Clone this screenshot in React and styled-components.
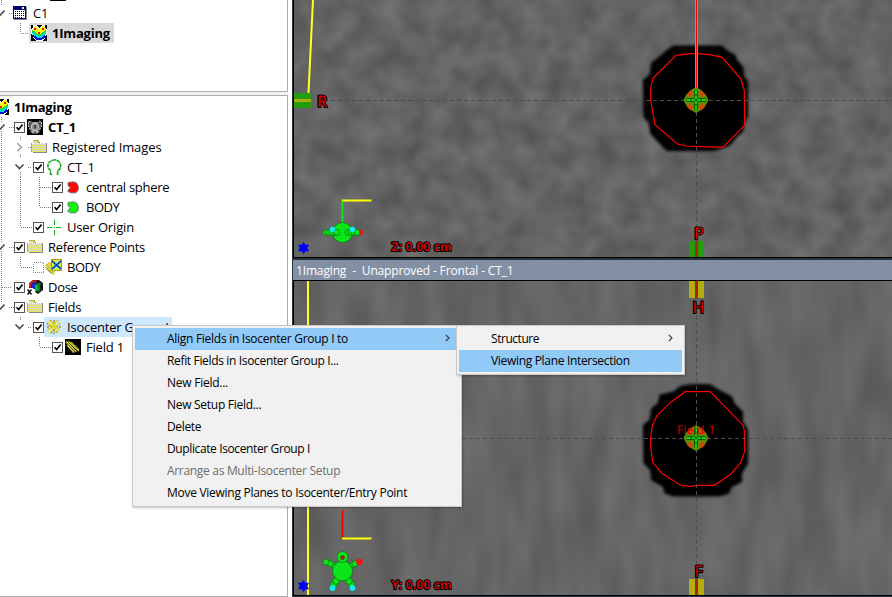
import React from 'react';
import styled, { createGlobalStyle, css } from 'styled-components';

const GlobalStyle = createGlobalStyle`
  * { box-sizing: border-box; }
  body { margin: 0; background: #fff; overflow: hidden; }
`;

const uiFont = `"Open Sans", "Noto Sans", sans-serif`;

const Window = styled.div`
  position: relative;
  width: 892px;
  height: 597px;
  display: flex;
  overflow: hidden;
  background: #fff;
  font-family: ${uiFont};
  color: #000;
`;

const Sidebar = styled.aside`
  width: 288px;
  flex: none;
  display: flex;
  flex-direction: column;
  background: #f0f0f0;
`;

const ScopePanel = styled.section`
  height: 92px;
  overflow: hidden;
  background: #fff;
  border: solid #adadad;
  border-width: 0 1px 1px 0;
  padding-top: 3px;
`;

const ObjectPanel = styled.section`
  height: 502px;
  margin-top: 3px;
  overflow: hidden;
  background: #fff;
  border: solid #adadad;
  border-width: 1px 1px 1px 0;
  padding-top: 1px;
`;

const Row = styled.div`
  display: flex;
  align-items: center;
  height: 20px;
`;

const Gutter = styled.svg`
  flex: none;
  width: ${(p) => p.$w}px;
  height: 20px;
  overflow: visible;
`;

const Entry = styled.div`
  display: flex;
  align-items: center;
  height: 20px;
  padding-left: ${(p) => p.$pad || 0}px;
  padding-right: ${(p) => p.$end || 0}px;
  background: ${(p) => p.$bg || 'transparent'};
`;

const Label = styled.span`
  font-size: 13px;
  line-height: 20px;
  white-space: pre;
  margin-left: ${(p) => p.$gap ?? 5}px;
  letter-spacing: ${(p) => p.$ls ?? -0.15}px;
  ${(p) => p.$bold && css`font-weight: 700;`}
`;

const Glyph = styled.svg`
  flex: none;
  display: block;
  overflow: ${(p) => (p.$clip ? 'hidden' : 'visible')};
`;

const Workspace = styled.main`
  flex: 1;
  margin-left: 4px;
  display: flex;
  flex-direction: column;
  background: #26343f;
`;

const View = styled.div`
  height: ${(p) => p.$h}px;
  margin-left: 1px;
  border-left: 1px solid #000;
  border-bottom: 1px solid #000;
  overflow: hidden;
`;

const Scene = styled.svg`
  display: block;
  text-rendering: geometricPrecision;
`;

const ViewTitle = styled.header`
  height: 21px;
  margin: 2px 0 0 1px;
  padding-left: 3px;
  background: #8390a4;
  border-bottom: 1px solid #000;
  color: #fff;
  font-size: 12px;
  line-height: 21px;
  white-space: pre;
  letter-spacing: -0.15px;
`;

const Menu = styled.div`
  position: absolute;
  left: ${(p) => p.$x}px;
  top: ${(p) => p.$y}px;
  width: ${(p) => p.$w}px;
  padding: 2px;
  background: #f1f1f1;
  border: 1px solid #c8c8c8;
  box-shadow: 1px 1px 2px rgba(0, 0, 0, 0.25);
`;

const MenuItem = styled.div`
  display: flex;
  align-items: center;
  justify-content: space-between;
  height: 22px;
  padding: 0 ${(p) => p.$end ?? 6}px 2px 32px;
  font-size: 12px;
  letter-spacing: ${(p) => p.$ls ?? -0.28}px;
  white-space: nowrap;
  color: ${(p) => (p.$disabled ? '#6d6d6d' : '#000')};
  background: ${(p) => (p.$active ? '#91c9f7' : 'transparent')};
`;

/* ---------- tree parts ---------- */

const dots = { stroke: '#808080', strokeDasharray: '1 1', fill: 'none', shapeRendering: 'crispEdges' };

function Guides({ w, lines = '', children }) {
  return (
    <Gutter $w={w}>
      {lines && <path d={lines} {...dots} />}
      {children}
    </Gutter>
  );
}

const Open = ({ x = 15 }) => (
  <path d={`M${x + 0.5} 7.5 L${x + 4.5} 11.5 L${x + 8.5} 7.5`} fill="none" stroke="#4a4a4a" strokeWidth="1.6" />
);
const Closed = () => <path d="M17.3 6.3l4 4-4 4" fill="none" stroke="#a0a0a0" strokeWidth="1.5" />;

const Check = ({ off }) => (
  <Glyph width="11" height="11" viewBox="0 0 11 11">
    {off ? (
      <rect x=".5" y=".5" width="10" height="10" fill="none" stroke="#909090" strokeDasharray="1 1" shapeRendering="crispEdges" />
    ) : (
      <>
        <rect x=".5" y=".5" width="10" height="10" fill="#fff" stroke="#555" />
        <path d="M2.6 5.2l2 2.3 4-5" fill="none" stroke="#000" strokeWidth="1.7" />
      </>
    )}
  </Glyph>
);

const PlanArt = () => (
  <g shapeRendering="crispEdges">
    <rect width="16" height="16" fill="#000" />
    <path d="M2 0h3l3 3 3-3h3v2l2 3v4l-2 2v2l-3 3H5l-3-3v-2L0 9V5l2-3z" fill="#fff" />
    <path d="M2 9h12v3l-2 2-2 1H6l-2-1-2-2z" fill="#0010d0" />
    <path d="M1 7h14v2l-3 2-2 2H6l-2-2-3-2z" fill="#00d8e8" />
    <path d="M1 5h14v2l-4 2-1 2H6L5 9 1 7z" fill="#20e020" />
    <path d="M2 3l2-2 4 3 4-3 2 2v3l-3 1-1 2H6L5 7 2 6z" fill="#ffff00" />
    <path d="M3 3h2v2H3zM11 3h2v2h-2zM7 7h2v2H7z" fill="#f01010" />
  </g>
);

const PlanIcon = () => (
  <Glyph width="16" height="16" viewBox="0 0 16 16"><PlanArt /></Glyph>
);

const CourseIcon = () => (
  <Glyph width="14" height="14" viewBox="0 0 14 14" shapeRendering="crispEdges">
    <path d="M1 1h13v13H1z" fill="#888" />
    <rect width="13" height="13" fill="#00007c" />
    <path d="M1 4h11v8H1z" fill="#fff" />
    <path d="M9 1h2v2H9z" fill="#fff" />
    <path d="M2 5.500h9M2 7.500h9M2 9.500h9M2 11.500h7" stroke="#000" strokeDasharray="1 1" />
  </Glyph>
);

const CtIcon = () => (
  <Glyph width="16" height="16" viewBox="0 0 16 16">
    <rect width="16" height="16" fill="#000" />
    <path d="M1.500 3l2-1 1.500 1.500h6L12.500 2l2 1v4l-1.500 3-2 4H5l-2-4-1.500-3z" fill="#555" stroke="#d8d8d8" strokeDasharray="2 1" />
    <circle cx="8" cy="8" r="3.800" fill="#8c8c8c" stroke="#d4d4d4" />
    <path d="M8 6v3.500" stroke="#000" />
    <path d="M5.500 13.500l1-2M10.500 13.500l-1-2" stroke="#fff" />
  </Glyph>
);

const FolderIcon = () => (
  <Glyph width="16" height="16" viewBox="0 0 16 16" shapeRendering="crispEdges">
    <defs>
      <pattern id="dither" width="2" height="2" patternUnits="userSpaceOnUse">
        <rect width="2" height="2" fill="#f0ec60" />
        <path d="M0 0h1v1H0zM1 1h1v1H1z" fill="#cfcfc4" />
      </pattern>
    </defs>
    <path d="M2 4l1-2h5l1 2h7v10H2z" fill="#8a8a8a" />
    <path d="M0 5l2-2 1-1h4l1 2h7v9H0z" fill="url(#dither)" />
    <path d="M0 13V4.500h1M2.500 2.500L3 1.500h4l1 2" fill="none" stroke="#b4ae50" />
    <path d="M1 4.500h13" stroke="#fff" strokeDasharray="1 1" />
  </Glyph>
);

const HeadIcon = () => (
  <Glyph width="15" height="16" viewBox="0 0 15 16">
    <path d="M5 15.300H3.500v-4L1.500 9.500.8 6.500 2 3.500 5 1.200 9 .8l3 1.700 1.800 3.500-.8 4-2.500 1.500.3 3.800H9.500" fill="none" stroke="#12a512" strokeWidth="1.500" strokeDasharray="4 .6" />
  </Glyph>
);

const BlobIcon = ({ fill }) => (
  <Glyph width="12" height="13" viewBox="0 0 12 13">
    <path d="M1 1.500L6 .7 9.500 1.800 11.300 5v4L9 11.800 4.500 12 .8 10.500 1.500 8.500 3.500 6.800 1 4.800z" fill={fill} stroke="#777" strokeWidth=".9" />
  </Glyph>
);

const OriginIcon = () => (
  <Glyph width="15" height="15" viewBox="0 0 15 15" shapeRendering="crispEdges">
    <path d="M7.500 0v5M7.500 10v5M0 7.500h5M9 7.500h5" stroke="#0bb00b" />
    <path d="M7 7h1v1H7z" fill="#0bb00b" />
  </Glyph>
);

const RefPointIcon = () => (
  <Glyph width="16" height="16" viewBox="0 0 16 16">
    <path d="M0 7l5-3M0 7l8 8M2 5l7 7M1 9l5 5" stroke="#8c8620" strokeWidth="2.400" />
    <path d="M0 7l5-3M0 7l8 8M2 5l7 7" stroke="#f5ef30" strokeWidth="1.300" />
    <rect x="5.500" y=".5" width="10" height="11" fill="#f8f020" stroke="#a39c1c" />
    <rect x="7" y="2.500" width="7" height="7" fill="#a8e4f0" />
    <path d="M6 2l9 8M15 2L6 10" stroke="#0080c0" strokeWidth="1.800" />
    <path d="M6 2l9 8M15 2L6 10" stroke="#000050" strokeDasharray="1.500 1" />
  </Glyph>
);

const DoseIcon = () => (
  <Glyph width="17" height="16" viewBox="0 0 17 16">
    <path d="M2 9V4l4-3h6l4 3v7l-5 4-3-2V9z" fill="#16161a" />
    <path d="M2 8V4.500L5.500 1.500h5L9 3H6.500L4 5.500V9z" fill="#e02020" />
    <path d="M4.500 8.500V5.500L7 3.500h4L9 5v6l-2-1z" fill="#1828d0" />
    <path d="M8 6l5-1.500v6L8 13z" fill="#00c030" />
    <path d="M8 6l3-2 4 .5-2 1.500v6l-2 1V7z" fill="#058018" />
    <path d="M.5 10.500l4 5M4.500 10.500l-4 5" stroke="#000" strokeWidth="1.300" />
  </Glyph>
);

const IsoIcon = () => (
  <Glyph width="16" height="16" viewBox="0 0 16 16">
    <path d="M1 4l11 10M4 1l10 11M14 4L4 15M12 1L1 12M1 8h14M8 1v14" stroke="#9a9432" strokeWidth="1.500" strokeDasharray="2 1" />
    <path d="M1.500 3l12 11M3 1.500l12 11M14.500 3l-12 11M12 1.500L1 12" stroke="#f1e92c" strokeWidth="1.300" strokeDasharray="2.500 .6" />
  </Glyph>
);

const FieldIcon = () => (
  <Glyph width="16" height="16" viewBox="0 0 16 16">
    <rect width="16" height="16" fill="#000" />
    <path d="M1 3l10 10M3 2l11 10M6 3l8 8M2 6l7 8" stroke="#a19c28" strokeWidth="1.500" />
    <path d="M1.500 2.500l10 10M4.500 3.500l9 8M3 7l6 6" stroke="#f8f250" strokeWidth=".9" />
  </Glyph>
);

const edgeCheck = <path d="M0 12.500L4.500 7.500" stroke="#4a4a4a" strokeWidth="1.600" />;

/* ---------- image views ---------- */

function Tissue({ id, freq, seed, x, y, w, h, gain, base }) {
  const channel = `${gain} 0 0 0 ${base}`;
  return (
    <>
      <filter id={id} x="0" y="0" width="100%" height="100%" colorInterpolationFilters="sRGB">
        <feTurbulence type="fractalNoise" baseFrequency={freq} numOctaves="2" seed={seed} />
        <feColorMatrix values={`${channel} ${channel} ${channel} 0 0 0 0 1`} />
      </filter>
      <rect x={x} y={y} width={w} height={h} fill="#646464" />
      <rect x={x} y={y} width={w} height={h} filter={`url(#${id})`} />
    </>
  );
}

const CrossLine = styled.path`
  stroke: #4c4c4c;
  stroke-width: 1;
  stroke-dasharray: 4 3;
  fill: none;
  shape-rendering: crispEdges;
`;

const OutlinedText = styled.text`
  font-family: ${uiFont};
  font-size: ${(p) => p.$size}px;
  font-weight: ${(p) => p.$weight || 400};
  fill: ${(p) => p.$fill || '#f00000'};
  stroke: #000;
  stroke-width: 2.2px;
  paint-order: stroke;
  stroke-linejoin: round;
`;

const FieldText = styled.text`
  font-family: ${uiFont};
  font-size: 12px;
  fill: #d40000;
`;

const IsoMarker = ({ cy }) => (
  <g transform={`translate(696 ${cy})`}>
    <path d="M0-13L5-10 10-5 12.500 0 10 5 5 10 0 13-5 10-10 5-12.500 0-10-5-5-10z" fill="#5d8d05" />
    <path d="M-8-4l4-4M8-4L4-8M-8 5l4 4M8 5L4 9" stroke="#d34a08" strokeWidth="4" />
    <path d="M0-9.500V9.500M-9.500 0H9.500" stroke="#064006" strokeWidth="3.500" />
    <path d="M0-9.500V9.500M-9.500 0H9.500" stroke="#12d812" strokeWidth="2" strokeDasharray="4 1" />
    <circle r="2" fill="#086008" stroke="#14d020" />
  </g>
);

const Star = ({ cy }) => (
  <path transform={`translate(303.500 ${cy})`} d="M0-6L2-3.300H5.500L3.800 0 5.500 3.300H2L0 6-2 3.300H-5.500L-3.800 0-5.500-3.300H-2z" fill="#0000fa" />
);

const bead = { fill: '#0be31b', stroke: '#087c10', strokeWidth: 0.8 };

function TransversalView() {
  return (
    <Scene width="598" height="257" viewBox="294 0 598 257">
      <Tissue id="grainA" freq=".042" seed="7" gain={0.17} base={0.305} x="294" y="0" w="598" h="257" />
      <defs>
        <filter id="soft"><feGaussianBlur stdDeviation="4" /></filter>
      </defs>
      <g transform="translate(620 20) scale(.33333)">
        <path filter="url(#soft)" d="M160 78H305L325 95 345 105 350 120 368 140 372 170 383 185V290L373 305 368 335 350 350 330 375 305 385 280 392H140L115 365 92 340 88 310 72 290 70 180 90 165 95 130 125 105 135 95z" stroke="#000" strokeWidth="3" />
        <path d="M168 106L212 101H228L270 104 306 112 362 176 373 212 374 316 308 382 240 380 200 378 172 372 105 314 92 240V208L98 176z" fill="none" stroke="#f00" strokeWidth="3.600" />
      </g>
      <CrossLine d="M317 100.500H892M696.500 0V257" />
      <path d="M313 0L308.500 93" stroke="#ffff20" strokeWidth="2" />
      <rect x="294" y="93" width="17" height="15" fill="#249c0c" />
      <rect x="294" y="99" width="17" height="3" fill="#adaa0b" />
      <OutlinedText x="317" y="107" $size={16} $weight={600} $fill="#d00000">R</OutlinedText>
      <IsoMarker cy={100} />
      <path d="M696.500 0V88" stroke="#c09a62" strokeWidth="3" />
      <path d="M696.500 0V88" stroke="#ff0000" strokeWidth="1.200" />
      <OutlinedText x="694" y="239" $size={16} $fill="#e00000">P</OutlinedText>
      <rect x="689" y="241" width="15" height="16" fill="#249c0c" />
      <rect x="695" y="241" width="3" height="16" fill="#ac240c" />
      <path d="M342.500 222V200" stroke="#0be31b" strokeWidth="2" />
      <path d="M342 200.500H371.500" stroke="#ffff00" strokeWidth="2" />
      <circle cx="326" cy="232.500" r="3" {...bead} />
      <circle cx="329" cy="232.500" r="3" {...bead} />
      <circle cx="360" cy="232.500" r="3" fill="#f01414" />
      <circle cx="342.500" cy="232.500" r="10" {...bead} />
      {[332, 335, 337, 348, 351, 354, 357].map((x) => <circle key={x} cx={x} cy="232.500" r="3" {...bead} />)}
      <circle cx="332.500" cy="229.500" r="2.700" fill="#10ecec" />
      <circle cx="352.500" cy="229.500" r="2.700" fill="#10ecec" />
      <Star cy={248} />
      <OutlinedText x="391.500" y="251" $size={12} $weight={600} textLength="60">Z: 0.00 cm</OutlinedText>
    </Scene>
  );
}

function FrontalView() {
  return (
    <Scene width="598" height="314" viewBox="294 281 598 314">
      <Tissue id="grainB" freq=".04 .012" seed="12" gain={0.13} base={0.33} x="294" y="281" w="598" h="314" />
      <g transform="translate(620 370) scale(.33333)">
        <path filter="url(#soft)" d="M180 50L210 44H270L300 62 335 80 342 100 368 125V155L383 180V280L365 310V335L335 350 325 370 300 378H160L135 370 130 350 95 330 92 300 72 280 70 165 90 150 95 115 115 100 120 75 160 66z" stroke="#000" strokeWidth="3" />
        <path d="M196 65H271L370 167 374 190V244L362 278 333 312 283 346H238L208 349 180 345 125 309 98 277 92 230V205L96 170 110 138 150 98z" fill="none" stroke="#f00" strokeWidth="3.600" />
      </g>
      <CrossLine d="M294 438.500H892M696.500 281V595" />
      <path d="M308 281V595" stroke="#ffff20" strokeWidth="2" />
      <rect x="689" y="281" width="15" height="17" fill="#b2ae0c" />
      <rect x="695" y="281" width="3" height="17" fill="#a82408" />
      <OutlinedText x="692.500" y="313" $size={16} $fill="#f00000">H</OutlinedText>
      <IsoMarker cy={438} />
      <FieldText x="677" y="434" textLength="38">Field 1</FieldText>
      <OutlinedText x="694.500" y="577" $size={16} $fill="#d00000">F</OutlinedText>
      <rect x="689" y="579" width="15" height="16" fill="#b2ae0c" />
      <rect x="695" y="579" width="3" height="16" fill="#a82408" />
      <path d="M342.500 510V538" stroke="#f00" strokeWidth="2" />
      <path d="M342 538.500H371.500" stroke="#ffff00" strokeWidth="2" />
      {[[335, 566], [332, 564.5], [330, 563.5], [350, 566], [353, 564.5], [355, 563.5]].map(([x, y]) => (
        <circle key={x} cx={x} cy={y} r="3" {...bead} />
      ))}
      <circle cx="326" cy="562" r="3" {...bead} />
      <circle cx="359.500" cy="562" r="3.300" fill="#f01414" />
      {[[334, 584], [336, 581], [351, 584], [349, 581]].map(([x, y]) => <circle key={x} cx={x} cy={y} r="3.300" {...bead} />)}
      <circle cx="332.500" cy="588" r="2.900" fill="#10ecec" />
      <circle cx="352.500" cy="588" r="2.900" fill="#10ecec" />
      <circle cx="342.500" cy="571" r="10" {...bead} />
      <circle cx="342.500" cy="557" r="5.500" {...bead} />
      <circle cx="342.500" cy="557.500" r="2" fill="#e01010" stroke="#075c0c" strokeWidth=".7" />
      <Star cy={586} />
      <OutlinedText x="391.500" y="589" $size={12} $weight={600} textLength="60">Y: 0.00 cm</OutlinedText>
    </Scene>
  );
}

const Arrow = () => (
  <Glyph width="5" height="8" viewBox="0 0 5 8">
    <path d="M.8.8L4 4 .8 7.200" fill="none" stroke="#333" strokeWidth="1.100" />
  </Glyph>
);

export default function App() {
  return (
    <>
      <GlobalStyle />
      <Window>
        <Sidebar>
          <ScopePanel>
            <Row>
              <Guides w={13} lines="M1.500 -3V3M9 10.500H13">
                {edgeCheck}
                <path d="M50-2.500H66" stroke="#000" />
              </Guides>
              <CourseIcon />
              <Label $gap={6}>C1</Label>
            </Row>
            <Row>
              <Guides w={29} lines="M20.500 0V10M21 10.500H29" />
              <Entry $pad={2} $end={4} $bg="#d9d9d9">
                <PlanIcon />
                <Label $bold $ls={-0.2}>1Imaging</Label>
              </Entry>
            </Row>
          </ScopePanel>
          <ObjectPanel>
            <Row>
              <Glyph $clip width="9" height="16" viewBox="7 0 9 16"><PlanArt /></Glyph>
              <Label $bold $ls={-0.25}>1Imaging</Label>
            </Row>
            <Row>
              <Guides w={14} lines="M1.500 0V6M1.500 14V20M9 10.500H14">{edgeCheck}</Guides>
              <Check />
              <Entry $pad={2}><CtIcon /><Label $bold $ls={-0.1}>CT_1</Label></Entry>
            </Row>
            <Row>
              <Guides w={31} lines="M1.500 0V20M20.500 0V4M20.500 17V20M28 10.500H31"><Closed /></Guides>
              <FolderIcon />
              <Label $ls={-0.1}>Registered Images</Label>
            </Row>
            <Row>
              <Guides w={33} lines="M1.500 0V20M20.500 15V20M28 10.500H32"><Open /></Guides>
              <Check />
              <Entry $pad={3}><HeadIcon /><Label>CT_1</Label></Entry>
            </Row>
            <Row>
              <Guides w={52} lines="M1.500 0V20M20.500 0V20M39.500 0V20M40 10.500H51" />
              <Check />
              <Entry $pad={4}><BlobIcon fill="#fb0505" /><Label $gap={7} $ls={-0.3}>central sphere</Label></Entry>
            </Row>
            <Row>
              <Guides w={52} lines="M1.500 0V20M20.500 0V20M39.500 0V10M40 10.500H51" />
              <Check />
              <Entry $pad={4}><BlobIcon fill="#0af50a" /><Label $gap={7} $ls={-0.5}>BODY</Label></Entry>
            </Row>
            <Row>
              <Guides w={33} lines="M1.500 0V20M20.500 0V10M21 10.500H32" />
              <Check />
              <Entry $pad={3}><OriginIcon /><Label>User Origin</Label></Entry>
            </Row>
            <Row>
              <Guides w={14} lines="M1.500 0V6M1.500 14V20M9 10.500H14">{edgeCheck}</Guides>
              <Check />
              <Entry $pad={2}><FolderIcon /><Label $ls={-0.33}>Reference Points</Label></Entry>
            </Row>
            <Row>
              <Guides w={33} lines="M1.500 0V20M20.500 0V10M21 10.500H32" />
              <Check off />
              <Entry $pad={2}><RefPointIcon /><Label $ls={-0.5}>BODY</Label></Entry>
            </Row>
            <Row>
              <Guides w={14} lines="M1.500 0V20M2 10.500H12" />
              <Check />
              <Entry $pad={2}><DoseIcon /><Label $gap={4} $ls={-0.3}>Dose</Label></Entry>
            </Row>
            <Row>
              <Guides w={14} lines="M1.500 0V6M9 10.500H14">{edgeCheck}</Guides>
              <Check />
              <Entry $pad={2}><FolderIcon /><Label $ls={-0.25}>Fields</Label></Entry>
            </Row>
            <Row>
              <Guides w={33} lines="M20.500 0V4M28 10.500H32"><Open /></Guides>
              <Check />
              <Entry $pad={2} $end={3} $bg="#cde8ff"><IsoIcon /><Label $ls={-0.22}>Isocenter Group I</Label></Entry>
            </Row>
            <Row>
              <Guides w={52} lines="M39.500 0V10M40 10.500H51" />
              <Check />
              <Entry $pad={2}><FieldIcon /><Label $ls={-0.2}>Field 1</Label></Entry>
            </Row>
          </ObjectPanel>
        </Sidebar>

        <Workspace>
          <View $h={258}><TransversalView /></View>
          <ViewTitle>1Imaging  -  Unapproved - Frontal - CT_1</ViewTitle>
          <View $h={315}><FrontalView /></View>
        </Workspace>

        <Menu $x={132} $y={325} $w={330}>
          <MenuItem $active $end={9}>Align Fields in Isocenter Group I to<Arrow /></MenuItem>
          <MenuItem $ls={-0.34}>Refit Fields in Isocenter Group I...</MenuItem>
          <MenuItem $ls={-0.25}>New Field...</MenuItem>
          <MenuItem>New Setup Field...</MenuItem>
          <MenuItem $ls={-0.35}>Delete</MenuItem>
          <MenuItem $ls={-0.38}>Duplicate Isocenter Group I</MenuItem>
          <MenuItem $disabled $ls={-0.31}>Arrange as Multi-Isocenter Setup</MenuItem>
          <MenuItem>Move Viewing Planes to Isocenter/Entry Point</MenuItem>
        </Menu>
        <Menu $x={456} $y={325} $w={229}>
          <MenuItem $end={9} $ls={-0.45}>Structure<Arrow /></MenuItem>
          <MenuItem $active $ls={-0.32}>Viewing Plane Intersection</MenuItem>
        </Menu>
      </Window>
    </>
  );
}
